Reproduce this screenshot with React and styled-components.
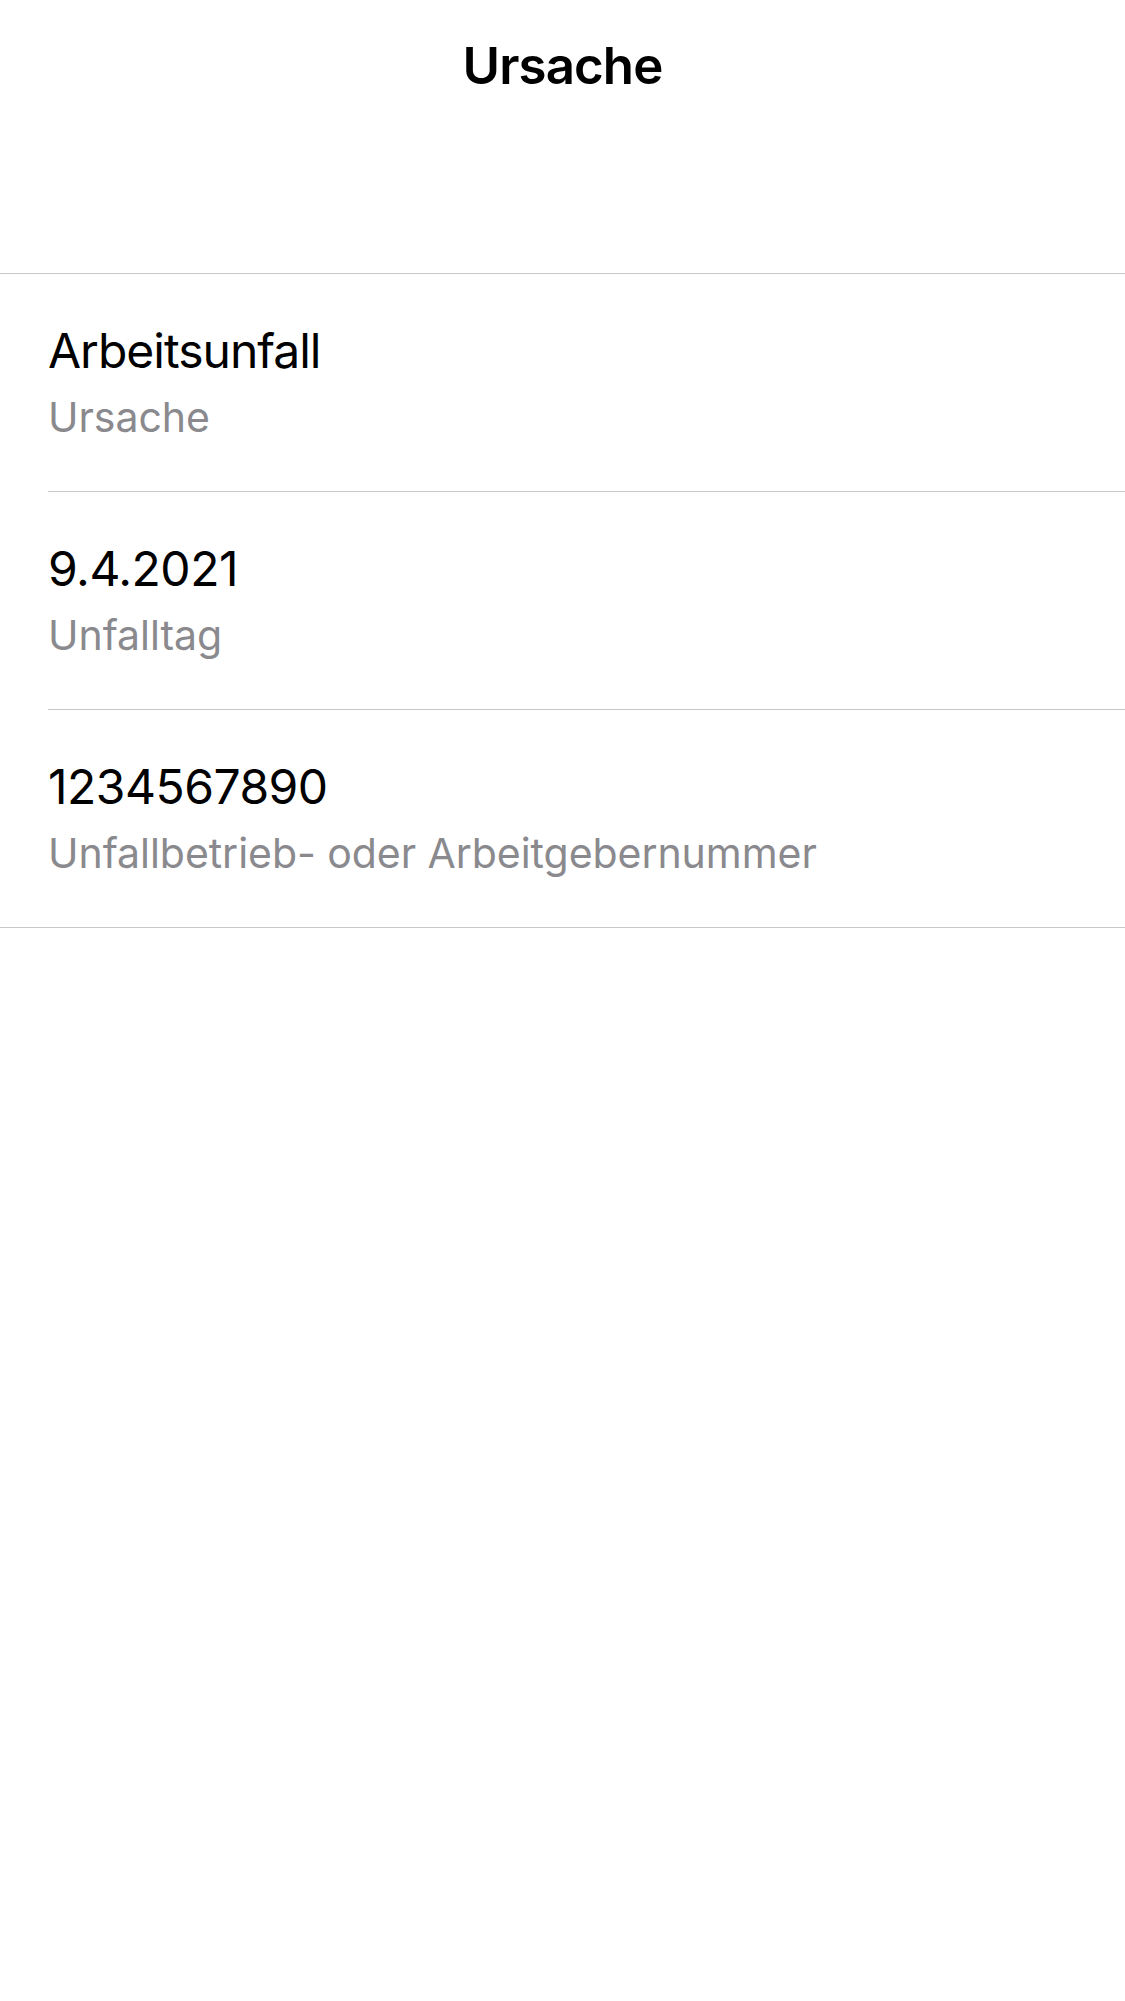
import React from 'react'
import styled, { createGlobalStyle } from 'styled-components'

const GlobalStyle = createGlobalStyle`
  html, body {
    margin: 0;
    padding: 0;
    background: #ffffff;
  }
  body {
    font-family: Inter, "Noto Sans", "Liberation Sans", sans-serif;
    -webkit-font-smoothing: antialiased;
  }
`

const Screen = styled.div`
  min-height: 2001px;
  background: #ffffff;
`

const Header = styled.header`
  height: 273px;
  box-sizing: border-box;
  padding-top: 35px;
  text-align: center;
`

const Title = styled.h1`
  margin: 0;
  font-size: 51px;
  line-height: 62px;
  font-weight: 600;
  color: #000;
  letter-spacing: -0.9px;
`

const List = styled.ul`
  list-style: none;
  margin: 0;
  padding: 0;
  border-top: 1px solid #c8c8ca;
  border-bottom: 1px solid #c8c8ca;
`

const Row = styled.li`
  padding-left: 48px;
`

const RowInner = styled.div`
  padding: 48px 0 49px;
  border-bottom: ${p => (p.last ? 'none' : '1px solid #c8c8ca')};
`

const Value = styled.div`
  font-size: 48px;
  line-height: 58px;
  color: #000;
  letter-spacing: ${p => (p.numeric ? '-0.5px' : '-1px')};
`

const Label = styled.div`
  margin-top: 12px;
  font-size: 41px;
  line-height: 50px;
  color: #8a8a8e;
  letter-spacing: -0.05px;
`

const items = [
  { value: 'Arbeitsunfall', label: 'Ursache' },
  { value: '9.4.2021', label: 'Unfalltag', numeric: true },
  { value: '1234567890', label: 'Unfallbetrieb- oder Arbeitgebernummer', numeric: true }
]

const App = () => (
  <Screen>
    <GlobalStyle />
    <Header>
      <Title>Ursache</Title>
    </Header>
    <List>
      {items.map((item, i) => (
        <Row key={item.label}>
          <RowInner last={i === items.length - 1}>
            <Value numeric={item.numeric}>{item.value}</Value>
            <Label>{item.label}</Label>
          </RowInner>
        </Row>
      ))}
    </List>
  </Screen>
)

export default App
